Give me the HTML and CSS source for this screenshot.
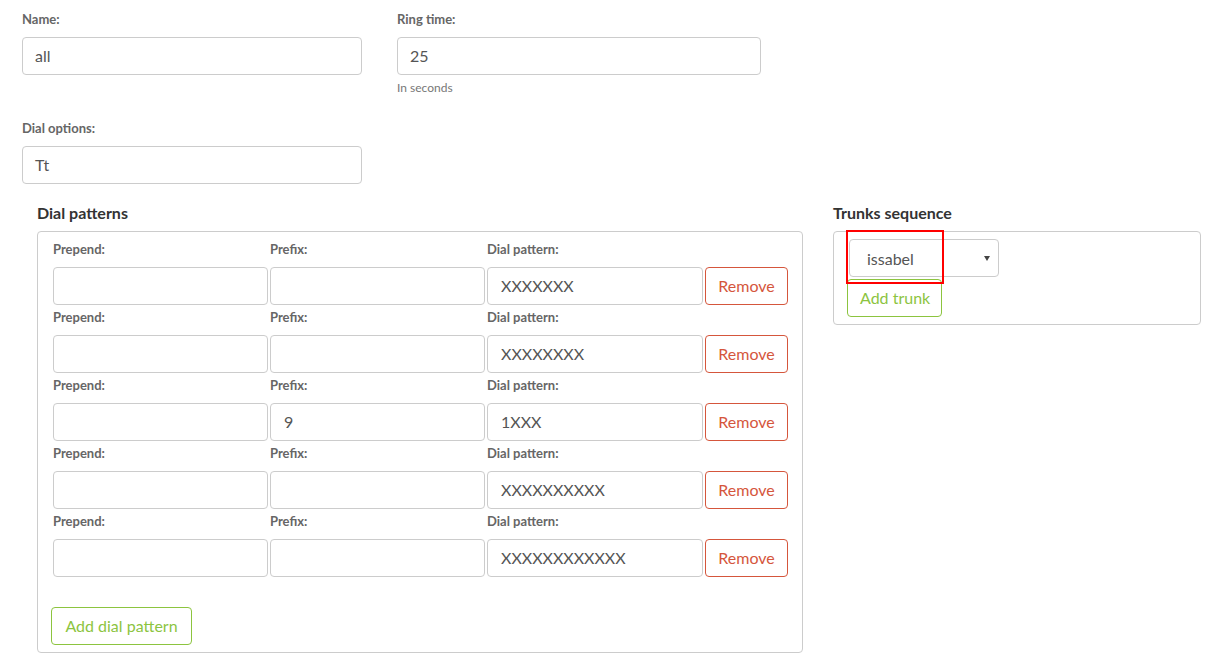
FILE: index.html
```html
<!DOCTYPE html>
<html>
<head>
<meta charset="utf-8">
<link rel="stylesheet" href="styles.css">
</head>
<body>
<div class="page">
  <div class="top-row">
    <div class="field">
      <label class="lbl">Name:</label>
      <div class="input">all</div>
    </div>
    <div class="field">
      <label class="lbl">Ring time:</label>
      <div class="input">25</div>
      <div class="help">In seconds</div>
    </div>
  </div>
  <div class="top-row second">
    <div class="field">
      <label class="lbl">Dial options:</label>
      <div class="input">Tt</div>
    </div>
  </div>

  <div class="sections">
    <section>
      <h3 class="sec-title">Dial patterns</h3>
      <div class="panel patterns">
        <div class="pat-row">
          <label class="lbl sm">Prepend:</label><label class="lbl sm">Prefix:</label><label class="lbl sm">Dial pattern:</label><span></span>
          <div class="input"></div><div class="input"></div><div class="input">XXXXXXX</div><div class="btn remove">Remove</div>
        </div>
        <div class="pat-row">
          <label class="lbl sm">Prepend:</label><label class="lbl sm">Prefix:</label><label class="lbl sm">Dial pattern:</label><span></span>
          <div class="input"></div><div class="input"></div><div class="input">XXXXXXXX</div><div class="btn remove">Remove</div>
        </div>
        <div class="pat-row">
          <label class="lbl sm">Prepend:</label><label class="lbl sm">Prefix:</label><label class="lbl sm">Dial pattern:</label><span></span>
          <div class="input"></div><div class="input">9</div><div class="input">1XXX</div><div class="btn remove">Remove</div>
        </div>
        <div class="pat-row">
          <label class="lbl sm">Prepend:</label><label class="lbl sm">Prefix:</label><label class="lbl sm">Dial pattern:</label><span></span>
          <div class="input"></div><div class="input"></div><div class="input">XXXXXXXXXX</div><div class="btn remove">Remove</div>
        </div>
        <div class="pat-row">
          <label class="lbl sm">Prepend:</label><label class="lbl sm">Prefix:</label><label class="lbl sm">Dial pattern:</label><span></span>
          <div class="input"></div><div class="input"></div><div class="input">XXXXXXXXXXXX</div><div class="btn remove">Remove</div>
        </div>
        <div class="btn add add-pattern">Add dial pattern</div>
      </div>
    </section>
    <section>
      <h3 class="sec-title">Trunks sequence</h3>
      <div class="panel trunks">
        <div class="select"><span>issabel</span><span class="caret"></span></div>
        <div class="btn add add-trunk">Add trunk</div>
        <div class="highlight"></div>
      </div>
    </section>
  </div>
</div>
</body>
</html>
```
FILE: styles.css
```css
* { box-sizing: border-box; }
html, body { margin: 0; padding: 0; background: #fff; }
body {
  font-family: Lato, "Open Sans", "Liberation Sans", sans-serif;
  color: #555;
}
.page { padding: 10px 22px; }
.top-row {
  display: grid;
  grid-template-columns: 340px 364px;
  column-gap: 35px;
  align-items: start;
}
.top-row.second { margin-top: 23px; }
.lbl {
  display: block;
  font-size: 13px;
  line-height: 18px;
  font-weight: 700;
  color: #666;
  margin-bottom: 9px;
}
.input {
  height: 38px;
  border: 1px solid #ccc;
  border-radius: 4px;
  padding: 0 12px;
  font-size: 16px;
  line-height: 36px;
  color: #555;
  background: #fff;
  white-space: nowrap;
  overflow: hidden;
}
.help {
  font-size: 12px;
  line-height: 16px;
  margin-top: 5px;
  color: #777;
}
.sections {
  display: grid;
  grid-template-columns: 766px 368px;
  column-gap: 30px;
  padding-left: 15px;
  margin-top: 19px;
  align-items: start;
}
.sec-title {
  margin: 0 0 8px;
  font-size: 16px;
  line-height: 20px;
  font-weight: 700;
  color: #333;
}
.panel {
  position: relative;
  border: 1px solid #ccc;
  border-radius: 4px;
  background: #fff;
}
.patterns { padding: 8px 14px 7px 15px; }
.pat-row {
  display: grid;
  grid-template-columns: 215px 215px 216px 83px;
  column-gap: 2px;
  margin-bottom: 3px;
}
.pat-row .input { padding-left: 13px; }
.btn {
  display: inline-block;
  height: 38px;
  border: 1px solid;
  border-radius: 4px;
  font-size: 16px;
  line-height: 36px;
  text-align: center;
  background: #fff;
  white-space: nowrap;
}
.remove { color: #d5563c; border-color: #d5563c; }
.add { color: #8cc43f; border-color: #8cc43f; padding: 0 12px; }
.add-pattern { margin: 27px 0 0 -2px; width: 141px; }
.trunks { padding: 7px 15px 7px 15px; }
.select {
  width: 150px;
  height: 38px;
  border: 1px solid #ccc;
  border-radius: 4px;
  padding: 0 8px 0 17px;
  display: flex;
  align-items: center;
  justify-content: space-between;
  font-size: 16px;
  color: #555;
}
.caret {
  width: 0; height: 0;
  border-left: 3px solid transparent;
  border-right: 3px solid transparent;
  border-top: 5px solid #444;
}
.add-trunk { display: block; width: 95px; margin: 2px 0 0 -2px; }
.highlight {
  position: absolute;
  left: 12px;
  top: -2px;
  width: 98px;
  height: 54px;
  border: 2px solid #f00;
}
```
